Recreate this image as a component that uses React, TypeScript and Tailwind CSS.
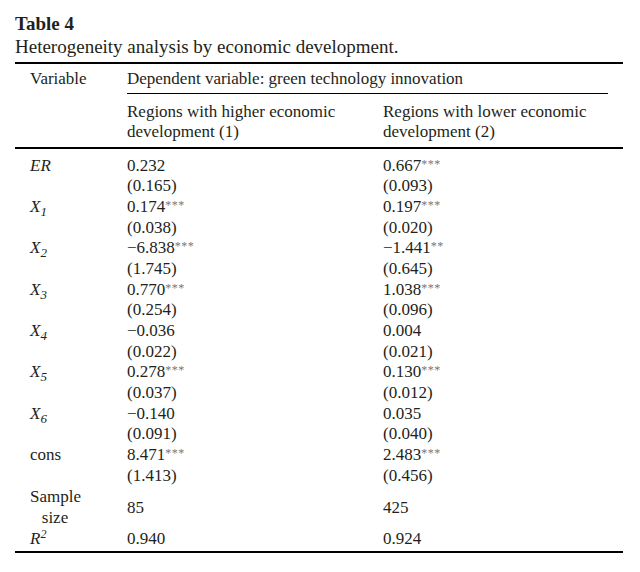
import React from "react";

type Row = { label: React.ReactNode; a: [string, string]; b: [string, string] };

const X = ({ n }: { n: number }) => (
  <span className="italic">
    X<span className="text-[13px] italic relative top-[4px] leading-none">{n}</span>
  </span>
);

const rows: Row[] = [
  { label: <span className="italic">ER</span>, a: ["0.232", ""], b: ["0.667", "***"] },
  { label: <X n={1} />, a: ["0.174", "***"], b: ["0.197", "***"] },
  { label: <X n={2} />, a: ["\u22126.838", "***"], b: ["\u22121.441", "**"] },
  { label: <X n={3} />, a: ["0.770", "***"], b: ["1.038", "***"] },
  { label: <X n={4} />, a: ["\u22120.036", ""], b: ["0.004", ""] },
  { label: <X n={5} />, a: ["0.278", "***"], b: ["0.130", "***"] },
  { label: <X n={6} />, a: ["\u22120.140", ""], b: ["0.035", ""] },
  { label: "cons", a: ["8.471", "***"], b: ["2.483", "***"] },
];

const ses: [string, string][] = [
  ["(0.165)", "(0.093)"],
  ["(0.038)", "(0.020)"],
  ["(1.745)", "(0.645)"],
  ["(0.254)", "(0.096)"],
  ["(0.022)", "(0.021)"],
  ["(0.037)", "(0.012)"],
  ["(0.091)", "(0.040)"],
  ["(1.413)", "(0.456)"],
];

const Coef = ({ v, s }: { v: string; s: string }) => (
  <span>
    {v}
    {s && <span className="text-[12px] text-[#777] relative top-[-3px] leading-none tracking-[0.5px]">{s}</span>}
  </span>
);

export default function App() {
  return (
    <div className="w-[640px] h-[572px] bg-white font-['Liberation_Serif',serif] text-[#231f20]">
      <div className="pl-[15px] pr-[17px] pt-[12px]">
        <div className="text-[19px] font-bold leading-[23px]">Table 4</div>
        <div className="text-[19px] leading-[23px]">Heterogeneity analysis by economic development.</div>
        <div className="mt-[4px] h-[2px] bg-black" />

        <div className="grid grid-cols-[112px_256px_1fr] text-[17px] leading-[20.67px] pt-[5px]">
          <div className="pl-[15px]">Variable</div>
          <div className="col-span-2">Dependent variable: green technology innovation</div>
        </div>
        <div className="grid grid-cols-[112px_1fr]">
          <div />
          <div className="mt-[3px] h-px bg-black mr-[15px]" />
        </div>
        <div className="grid grid-cols-[112px_256px_1fr] text-[17px] leading-[20px] pt-[8px]">
          <div />
          <div>
            Regions with higher economic
            <br />
            development (1)
          </div>
          <div>
            Regions with lower economic
            <br />
            development (2)
          </div>
        </div>
        <div className="mt-[5px] h-[2px] bg-black" />

        <div className="grid grid-cols-[112px_256px_1fr] text-[17px] leading-[20.67px] pt-[7px]">
          {rows.map((r, i) => (
            <React.Fragment key={i}>
              <div className="pl-[15px]">{r.label}</div>
              <div>
                <Coef v={r.a[0]} s={r.a[1]} />
              </div>
              <div>
                <Coef v={r.b[0]} s={r.b[1]} />
              </div>
              <div />
              <div>{ses[i][0]}</div>
              <div>{ses[i][1]}</div>
            </React.Fragment>
          ))}
          <div className="pl-[15px] pt-[1px]">
            <div className="w-[50px] text-center">
              Sample
              <br />
              size
            </div>
          </div>
          <div className="flex items-center pt-[1px]">85</div>
          <div className="flex items-center pt-[1px]">425</div>
          <div className="pl-[15px] italic">
            R<span className="text-[12px] italic relative top-[-6px] leading-none">2</span>
          </div>
          <div>0.940</div>
          <div>0.924</div>
        </div>
        <div className="mt-[2px] h-[2px] bg-black" />
      </div>
    </div>
  );
}
